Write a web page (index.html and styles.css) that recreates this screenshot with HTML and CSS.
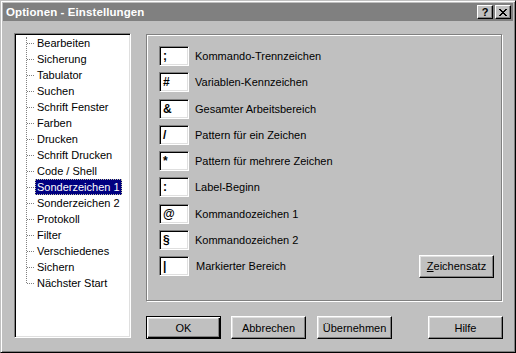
FILE: index.html
```html
<!DOCTYPE html>
<html lang="de">
<head>
<meta charset="utf-8">
<title>Optionen - Einstellungen</title>
<link rel="stylesheet" href="styles.css">
</head>
<body>
<div class="window">
  <div class="titlebar">
    <span class="title">Optionen - Einstellungen</span>
    <div class="caption-btns">
      <div class="cap-btn help">?</div>
      <div class="cap-btn close">
        <svg width="8" height="7" viewBox="0 0 8 7" shape-rendering="crispEdges"><path fill="#000" d="M0 0h2v1H0zM6 0h2v1H6zM1 1h2v1H1zM5 1h2v1H5zM2 2h4v1H2zM3 3h2v1H3zM2 4h4v1H2zM1 5h2v1H1zM5 5h2v1H5zM0 6h2v1H0zM6 6h2v1H6z"/></svg>
      </div>
    </div>
  </div>
  <div class="body">
    <div class="tree">
      <ul class="tree-list">
        <li><span>Bearbeiten</span></li>
        <li><span>Sicherung</span></li>
        <li><span>Tabulator</span></li>
        <li><span>Suchen</span></li>
        <li><span>Schrift Fenster</span></li>
        <li><span>Farben</span></li>
        <li><span>Drucken</span></li>
        <li><span>Schrift Drucken</span></li>
        <li><span>Code / Shell</span></li>
        <li class="selected"><span>Sonderzeichen 1</span></li>
        <li><span>Sonderzeichen 2</span></li>
        <li><span>Protokoll</span></li>
        <li><span>Filter</span></li>
        <li><span>Verschiedenes</span></li>
        <li><span>Sichern</span></li>
        <li><span>Nächster Start</span></li>
      </ul>
    </div>
    <div class="main">
      <div class="group">
        <div class="row"><div class="field">;</div><span class="label">Kommando-Trennzeichen</span></div>
        <div class="row"><div class="field">#</div><span class="label">Variablen-Kennzeichen</span></div>
        <div class="row"><div class="field">&amp;</div><span class="label">Gesamter Arbeitsbereich</span></div>
        <div class="row"><div class="field">/</div><span class="label">Pattern für ein Zeichen</span></div>
        <div class="row"><div class="field">*</div><span class="label">Pattern für mehrere Zeichen</span></div>
        <div class="row"><div class="field">:</div><span class="label">Label-Beginn</span></div>
        <div class="row"><div class="field">@</div><span class="label">Kommandozeichen 1</span></div>
        <div class="row"><div class="field">§</div><span class="label">Kommandozeichen 2</span></div>
        <div class="row"><div class="field">|</div><span class="label label-last">Markierter Bereich</span><div class="btn charset"><u>Z</u>eichensatz</div></div>
      </div>
      <div class="buttons">
        <div class="btn default">OK</div>
        <div class="btn cancel">Abbrechen</div>
        <div class="btn apply">Übernehmen</div>
        <div class="btn help-btn">Hilfe</div>
      </div>
    </div>
  </div>
</div>
</body>
</html>
```
FILE: styles.css
```css
html, body {
  margin: 0;
  padding: 0;
  background: #c0c0c0;
}

body {
  font-family: "Liberation Sans", Arial, sans-serif;
  font-size: 11px;
  color: #000;
}

.window {
  width: 516px;
  height: 353px;
  box-sizing: border-box;
  background: #c0c0c0;
  border: 1px solid;
  border-color: #c0c0c0 #000 #000 #c0c0c0;
  box-shadow: inset 1px 1px #fff, inset -1px -1px #808080;
  padding: 2px;
  display: flex;
  flex-direction: column;
}

.titlebar {
  height: 18px;
  background: #808080;
  display: flex;
  align-items: center;
  padding-left: 3px;
  flex-shrink: 0;
}

.title {
  color: #fff;
  font-weight: bold;
  font-size: 11.5px;
  letter-spacing: 0.1px;
  flex: 1;
}

.caption-btns {
  display: flex;
  gap: 2px;
  margin-right: 2px;
}

.cap-btn {
  width: 16px;
  height: 14px;
  box-sizing: border-box;
  background: #c0c0c0;
  border: 1px solid;
  border-color: #fff #000 #000 #fff;
  box-shadow: inset -1px -1px #808080;
  display: flex;
  align-items: center;
  justify-content: center;
  font-weight: bold;
  font-size: 11px;
  line-height: 12px;
}

.cap-btn.close svg {
  display: block;
  margin-left: -1px;
}

.body {
  flex: 1;
  display: flex;
  padding: 12px 0 0 11px;
}

.tree {
  width: 117px;
  height: 305px;
  box-sizing: border-box;
  background: #fff;
  border: 1px solid;
  border-color: #808080 #fff #fff #808080;
  box-shadow: inset 1px 1px #000, inset -1px -1px #dfdfdf;
  padding: 1px;
  flex-shrink: 0;
}

.tree-list {
  list-style: none;
  margin: 0;
  padding: 0;
  position: relative;
}

.tree-list::before {
  content: "";
  position: absolute;
  left: 10px;
  top: 2px;
  bottom: 8px;
  border-left: 1px dotted #808080;
}

.tree-list li {
  height: 16px;
  line-height: 16px;
  padding-left: 19px;
  position: relative;
  white-space: nowrap;
}

.tree-list li::before {
  content: "";
  position: absolute;
  left: 11px;
  top: 8px;
  width: 7px;
  border-top: 1px dotted #808080;
}

.tree-list li span {
  display: inline-block;
  padding: 0 2px;
  height: 16px;
  box-sizing: border-box;
}

.tree-list li.selected span {
  background: #000080;
  color: #fff;
  outline: 1px dotted #c0c0a0;
  outline-offset: -1px;
}

.main {
  width: 357px;
  margin-left: 15px;
  margin-top: 1px;
  display: flex;
  flex-direction: column;
}

.group {
  width: 356px;
  height: 267px;
  box-sizing: border-box;
  border: 1px solid #808080;
  box-shadow: inset 1px 1px #fff, 1px 1px #fff;
  padding: 11px 7px 0 12px;
  display: flex;
  flex-direction: column;
  gap: 6.25px;
}

.row {
  height: 20px;
  display: flex;
  align-items: center;
}

.field {
  width: 30px;
  height: 20px;
  box-sizing: border-box;
  background: #fff;
  border: 1px solid;
  border-color: #808080 #fff #fff #808080;
  box-shadow: inset 1px 1px #000, inset -1px -1px #dfdfdf;
  padding-left: 3px;
  font-weight: bold;
  font-size: 12px;
  line-height: 18px;
}

.label {
  margin-left: 6px;
}

.label-last {
  margin-left: 7px;
}

.btn {
  width: 75px;
  height: 23px;
  box-sizing: border-box;
  background: #c0c0c0;
  border: 1px solid;
  border-color: #fff #000 #000 #fff;
  box-shadow: inset -1px -1px #808080, inset 1px 1px #dfdfdf;
  display: flex;
  align-items: center;
  justify-content: center;
  font-size: 11px;
}

.btn.default {
  border: 1px solid #000;
  box-shadow: inset 1px 1px #fff, inset -1px -1px #000, inset -2px -2px #808080, inset 2px 2px #dfdfdf;
}

.charset {
  margin-left: auto;
}

.buttons {
  display: flex;
  margin-top: 15px;
}

.cancel {
  margin-left: 10px;
}

.apply {
  margin-left: 11px;
}

.help-btn {
  margin-left: auto;
}
```
